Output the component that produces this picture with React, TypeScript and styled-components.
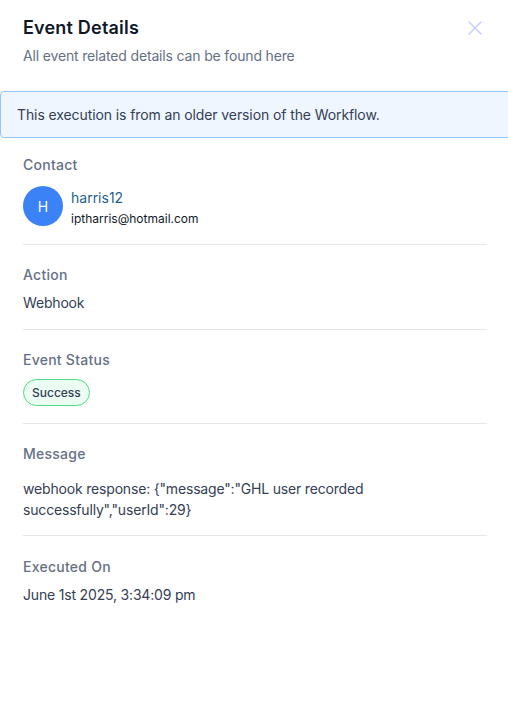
import React from "react";
import styled, { createGlobalStyle } from "styled-components";

const Global = createGlobalStyle`
  html, body { margin: 0; padding: 0; background: #fff; }
  body { font-family: Inter, "Noto Sans", sans-serif; -webkit-font-smoothing: antialiased; }
  * { box-sizing: border-box; }
`;

const Panel = styled.div`
  width: 508px;
  height: 728px;
  background: #fff;
  overflow: hidden;
`;

const Header = styled.header`
  display: flex;
  justify-content: space-between;
  align-items: flex-start;
  padding: 14px 23px 0 23px;
  height: 91px;
`;

const TitleBlock = styled.div`
  display: flex;
  flex-direction: column;
`;

const Title = styled.h2`
  margin: 0;
  font-size: 18px;
  line-height: 28px;
  font-weight: 600;
  letter-spacing: 0.2px;
  color: #101828;
`;

const Subtitle = styled.p`
  margin: 0;
  font-size: 14px;
  line-height: 28px;
  letter-spacing: -0.16px;
  color: #667085;
`;

const CloseButton = styled.button`
  border: none;
  background: none;
  padding: 0;
  margin-top: 6px;
  margin-right: 2px;
  width: 16px;
  height: 16px;
  display: flex;
  align-items: center;
  justify-content: center;
  color: #c7d2fe;
  cursor: pointer;
`;

const Banner = styled.div`
  margin-right: -6px;
  height: 47px;
  display: flex;
  align-items: center;
  padding: 0 16px;
  background: #eff6ff;
  border: 1px solid #93c5fd;
  border-radius: 4px;
  font-size: 14px;
  letter-spacing: -0.1px;
  color: #344054;
`;

const Body = styled.div`
  padding: 0 21px 0 23px;
`;

const Section = styled.section<{ $top?: number; $bottom?: number; $last?: boolean }>`
  padding: ${(p) => p.$top ?? 20}px 0 ${(p) => p.$bottom ?? 17}px;
  border-bottom: ${(p) => (p.$last ? "none" : "1px solid #e4e7ec")};
  display: flex;
  flex-direction: column;
`;

const Label = styled.div`
  font-size: 14px;
  line-height: 20px;
  font-weight: 500;
  letter-spacing: 0.25px;
  color: #667085;
`;

const Value = styled.div<{ $gap?: number; $lh?: number }>`
  margin-top: ${(p) => p.$gap ?? 8}px;
  font-size: 14px;
  line-height: ${(p) => p.$lh ?? 20}px;
  letter-spacing: -0.18px;
  color: #344054;
`;

const ContactRow = styled.div`
  margin-top: 11px;
  display: flex;
  align-items: flex-start;
  gap: 8px;
`;

const Avatar = styled.div`
  width: 40px;
  height: 40px;
  border-radius: 50%;
  background: #3b82f6;
  color: #fff;
  font-size: 14px;
  display: flex;
  align-items: center;
  justify-content: center;
`;

const ContactInfo = styled.div`
  display: flex;
  flex-direction: column;
  gap: 1px;
  padding-top: 2px;
`;

const ContactName = styled.a`
  font-size: 14px;
  line-height: 20px;
  color: #1f5f8b;
  text-decoration: none;
`;

const ContactEmail = styled.span`
  font-size: 12px;
  line-height: 20px;
  color: #101828;
`;

const Badge = styled.span`
  margin-top: 9px;
  align-self: flex-start;
  display: inline-flex;
  align-items: center;
  height: 27px;
  padding: 0 8px;
  border-radius: 14px;
  background: #ecfdf3;
  border: 1px solid #4ade80;
  font-size: 12px;
  font-weight: 500;
  color: #344054;
`;

const message = 'webhook response: {"message":"GHL user recorded successfully","userId":29}';

export default function App() {
  return (
    <Panel>
      <Global />
      <Header>
        <TitleBlock>
          <Title>Event Details</Title>
          <Subtitle>All event related details can be found here</Subtitle>
        </TitleBlock>
        <CloseButton aria-label="Close">
          <svg width="16" height="16" viewBox="0 0 16 16" fill="none">
            <path d="M2 2L14 14M14 2L2 14" stroke="currentColor" strokeWidth="1.6" strokeLinecap="round" />
          </svg>
        </CloseButton>
      </Header>
      <Banner>This execution is from an older version of the Workflow.</Banner>
      <Body>
        <Section $top={17} $bottom={15}>
          <Label>Contact</Label>
          <ContactRow>
            <Avatar>H</Avatar>
            <ContactInfo>
              <ContactName href="#">harris12</ContactName>
              <ContactEmail>iptharris@hotmail.com</ContactEmail>
            </ContactInfo>
          </ContactRow>
        </Section>
        <Section $bottom={16}>
          <Label>Action</Label>
          <Value>Webhook</Value>
        </Section>
        <Section>
          <Label>Event Status</Label>
          <Badge>Success</Badge>
        </Section>
        <Section $bottom={15}>
          <Label>Message</Label>
          <Value $gap={14} $lh={21}>{message}</Value>
        </Section>
        <Section $last $top={21}>
          <Label>Executed On</Label>
          <Value>June 1st 2025, 3:34:09 pm</Value>
        </Section>
      </Body>
    </Panel>
  );
}
